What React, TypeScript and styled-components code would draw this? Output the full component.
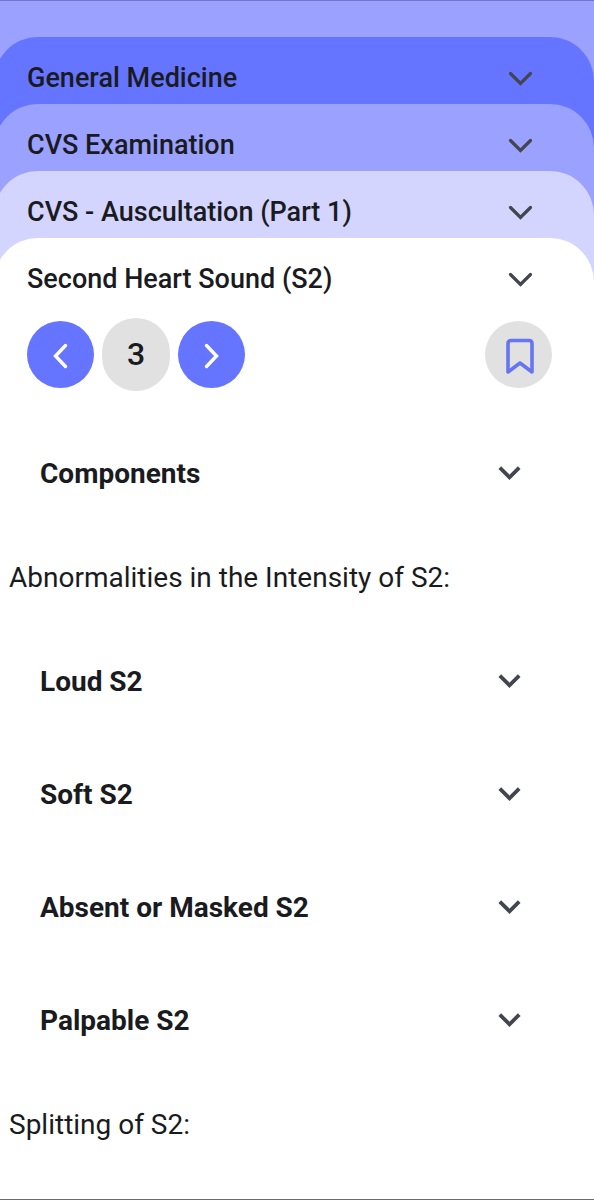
import React, { useState } from "react";
import styled, { createGlobalStyle } from "styled-components";

const GlobalStyle = createGlobalStyle`
  *, *::before, *::after { box-sizing: border-box; }
  body {
    margin: 0;
    background: #ffffff;
    color: #1a1b20;
    font-family: Roboto, "Liberation Sans", sans-serif;
  }
  button { font: inherit; color: inherit; }
`;

const Page = styled.main`
  display: flex;
  flex-direction: column;
  min-height: 100vh;
  padding-top: 36px;
  overflow: hidden;
  background: #9aa1ff;
  border-top: 1px solid #7376c8;
  border-bottom: 1px solid #6b6b6b;
`;

const Stack = styled.div`
  display: flex;
  flex: 1;
  flex-direction: column;
  margin-left: -6px;
`;

const Sheet = styled.section<{ $color: string }>`
  display: flex;
  flex: 1;
  flex-direction: column;
  background: ${(p) => p.$color};
  border-radius: 44px 44px 0 0;
`;

const SheetHeader = styled.button`
  display: flex;
  align-items: center;
  justify-content: space-between;
  width: 100%;
  height: 67px;
  padding: 14px 60px 0 33px;
  border: 0;
  background: transparent;
  font-size: 27px;
  font-weight: 500;
  line-height: 32px;
  text-align: left;
  cursor: pointer;
`;

const Content = styled.div`
  padding-left: 6px;
`;

const Pager = styled.nav`
  display: flex;
  align-items: center;
  gap: 8px;
  margin-top: 13px;
  padding: 0 42px 0 27px;
`;

const RoundButton = styled.button<{ $tone: "accent" | "muted" }>`
  display: flex;
  align-items: center;
  justify-content: center;
  width: 67px;
  height: 67px;
  padding: 0;
  border: 0;
  border-radius: 50%;
  background: ${(p) => (p.$tone === "accent" ? "#6675ff" : "#e1e1e1")};
  color: ${(p) => (p.$tone === "accent" ? "#ffffff" : "#6675f2")};
  cursor: pointer;
`;

const PageNumber = styled.span`
  width: 68px;
  height: 73px;
  border-radius: 34px;
  background: #e1e1e1;
  font-size: 32px;
  font-weight: 500;
  line-height: 72px;
  text-align: center;
`;

const Spacer = styled.div`
  flex: 1;
`;

const Topics = styled.div`
  padding-top: 26px;
`;

const TopicRow = styled.button`
  display: flex;
  align-items: center;
  justify-content: space-between;
  width: 100%;
  height: 113px;
  padding: 0 72px 0 40px;
  border: 0;
  background: transparent;
  font-size: 28px;
  font-weight: 700;
  line-height: 32px;
  text-align: left;
  cursor: pointer;
`;

const Note = styled.p`
  margin: 0;
  padding: 0 9px;
  font-size: 28px;
  line-height: 95px;
`;

const Icon = styled.svg`
  display: block;
  flex: none;
  fill: none;
  stroke: currentColor;
`;

const Chevron = styled(Icon)`
  stroke: #44464f;
`;

const SheetChevron = () => (
  <Chevron width="28" height="28" viewBox="0 0 28 28" strokeWidth="3.2" strokeLinecap="round" aria-hidden="true">
    <path d="M4.5 9.5 14.5 19.5 24.5 9.5" />
  </Chevron>
);

const TopicChevron = () => (
  <Chevron width="24" height="24" viewBox="0 0 24 24" strokeWidth="3.8" aria-hidden="true">
    <path d="M1.8 5.7 11.5 15.3 21.2 5.7" />
  </Chevron>
);

const Arrow = ({ d }: { d: string }) => (
  <Icon width="28" height="28" viewBox="0 0 28 28" strokeWidth="3.4" strokeLinecap="round" aria-hidden="true">
    <path d={d} />
  </Icon>
);

const Bookmark = () => (
  <Icon width="40" height="40" viewBox="0 0 40 40" strokeWidth="3.6" strokeLinejoin="round" aria-hidden="true">
    <path d="M9 37V8.5q0-3 3-3h18q3 0 3 3V37L21 28Z" />
  </Icon>
);

const sheets = [
  { title: "General Medicine", color: "#6675ff" },
  { title: "CVS Examination", color: "#9aa1ff" },
  { title: "CVS - Auscultation (Part 1)", color: "#d3d5ff" },
  { title: "Second Heart Sound (S2)", color: "#ffffff" },
];

const Topic = ({ title }: { title: string }) => {
  const [open, setOpen] = useState(false);
  return (
    <TopicRow type="button" aria-expanded={open} onClick={() => setOpen(!open)}>
      {title}
      <TopicChevron />
    </TopicRow>
  );
};

const Lesson = () => {
  const [page, setPage] = useState(3);
  return (
    <Content>
      <Pager aria-label="Pages">
        <RoundButton type="button" $tone="accent" aria-label="Previous page" onClick={() => setPage(Math.max(1, page - 1))}>
          <Arrow d="M18.500 4.500 8.500 15 18.500 25.500" />
        </RoundButton>
        <PageNumber>{page}</PageNumber>
        <RoundButton type="button" $tone="accent" aria-label="Next page" onClick={() => setPage(page + 1)}>
          <Arrow d="M8.500 4.500 18.500 15 8.500 25.500" />
        </RoundButton>
        <Spacer />
        <RoundButton type="button" $tone="muted" aria-label="Bookmark">
          <Bookmark />
        </RoundButton>
      </Pager>
      <Topics>
        <Topic title="Components" />
        <Note>Abnormalities in the Intensity of S2:</Note>
        <Topic title="Loud S2" />
        <Topic title="Soft S2" />
        <Topic title="Absent or Masked S2" />
        <Topic title="Palpable S2" />
        <Note>Splitting of S2:</Note>
      </Topics>
    </Content>
  );
};

const SheetLevel = ({ level }: { level: number }) => {
  const { title, color } = sheets[level];
  return (
    <Sheet $color={color}>
      <SheetHeader type="button">
        {title}
        <SheetChevron />
      </SheetHeader>
      {level < sheets.length - 1 ? <SheetLevel level={level + 1} /> : <Lesson />}
    </Sheet>
  );
};

export default function App() {
  return (
    <>
      <GlobalStyle />
      <Page>
        <Stack>
          <SheetLevel level={0} />
        </Stack>
      </Page>
    </>
  );
}
